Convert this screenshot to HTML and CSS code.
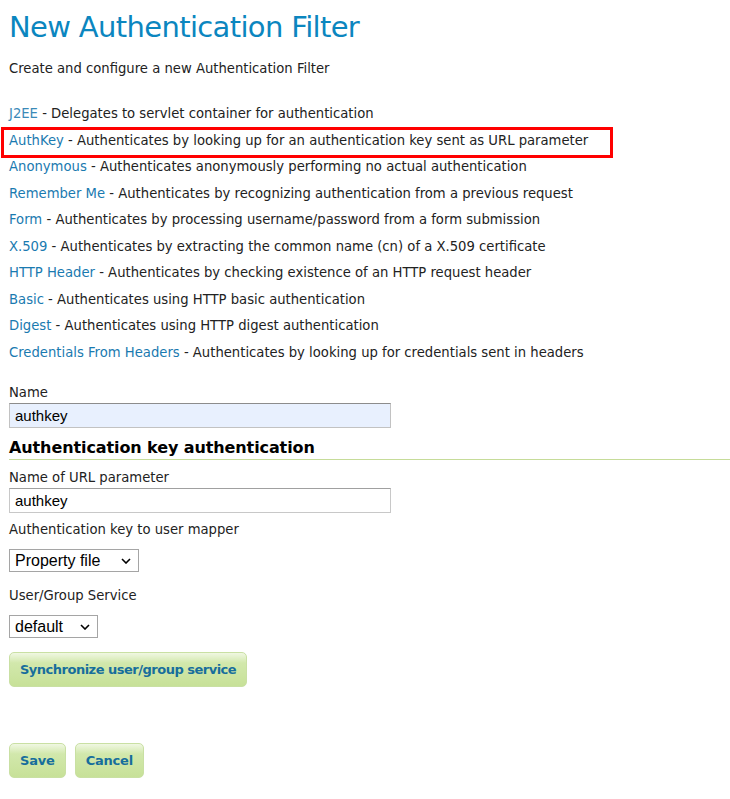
FILE: index.html
```html
<!DOCTYPE html>
<html>
<head>
<meta charset="utf-8">
<link rel="stylesheet" href="styles.css">
</head>
<body>
<div class="page">
  <h1 class="title">New Authentication Filter</h1>
  <p class="subtitle">Create and configure a new Authentication Filter</p>

  <ul class="filters">
    <li><a class="link visited">J2EE</a> - Delegates to servlet container for authentication</li>
    <li class="highlight"><a class="link">AuthKey</a> - Authenticates by looking up for an authentication key sent as URL parameter</li>
    <li><a class="link">Anonymous</a> - Authenticates anonymously performing no actual authentication</li>
    <li><a class="link">Remember Me</a> - Authenticates by recognizing authentication from a previous request</li>
    <li><a class="link">Form</a> - Authenticates by processing username/password from a form submission</li>
    <li><a class="link">X.509</a> - Authenticates by extracting the common name (cn) of a X.509 certificate</li>
    <li><a class="link">HTTP Header</a> - Authenticates by checking existence of an HTTP request header</li>
    <li><a class="link">Basic</a> - Authenticates using HTTP basic authentication</li>
    <li><a class="link">Digest</a> - Authenticates using HTTP digest authentication</li>
    <li><a class="link">Credentials From Headers</a> - Authenticates by looking up for credentials sent in headers</li>
  </ul>

  <div class="field first">
    <label class="label">Name</label>
    <input class="text autofill" type="text" value="authkey">
  </div>

  <h2 class="section">Authentication key authentication</h2>

  <div class="field after-section">
    <label class="label">Name of URL parameter</label>
    <input class="text" type="text" value="authkey">
  </div>

  <div class="field sel-field mapper-field">
    <label class="label">Authentication key to user mapper</label>
    <div class="select sel-mapper"><span>Property file</span><svg class="chev" viewBox="0 0 10 6" width="10" height="6"><path d="M1 1 L5 5 L9 1" fill="none" stroke="#000" stroke-width="1.6"/></svg></div>
  </div>

  <div class="field sel-field service-field">
    <label class="label">User/Group Service</label>
    <div class="select sel-service"><span>default</span><svg class="chev" viewBox="0 0 10 6" width="10" height="6"><path d="M1 1 L5 5 L9 1" fill="none" stroke="#000" stroke-width="1.6"/></svg></div>
  </div>

  <div class="sync-row">
    <button class="btn">Synchronize user/group service</button>
  </div>

  <div class="actions">
    <button class="btn">Save</button>
    <button class="btn">Cancel</button>
  </div>
</div>
</body>
</html>
```

FILE: styles.css
```css
html, body {
  margin: 0;
  padding: 0;
  background: #ffffff;
}
body {
  font-family: "DejaVu Sans", Verdana, sans-serif;
  font-size: 13.2px;
  color: #222222;
}
.page {
  padding: 0 0 0 9px;
}
.title {
  margin: 0;
  padding-top: 8px;
  font-family: "DejaVu Sans", Verdana, sans-serif;
  font-weight: normal;
  font-size: 29px;
  line-height: 38px;
  color: #0b86bf;
  letter-spacing: -0.65px;
}
.subtitle {
  margin: 13px 0 0 0;
  line-height: 20px;
}
.filters {
  list-style: none;
  margin: 22px 0 0 0;
  padding: 0;
}
.filters li {
  line-height: 26.5px;
  position: relative;
  white-space: nowrap;
}
.link {
  color: #1a7ab0;
  text-decoration: none;
}
.link.visited {
  color: #3a8ab8;
}
.highlight::after {
  content: "";
  position: absolute;
  left: -8px;
  top: -1px;
  width: 612px;
  height: 31px;
  border: 3px solid #ff0000;
  box-sizing: border-box;
}
.field {
  display: flex;
  flex-direction: column;
  align-items: flex-start;
}
.field.first {
  margin-top: 17px;
}
.label {
  line-height: 20px;
}
.text {
  width: 382px;
  height: 25px;
  box-sizing: border-box;
  border: 1px solid #c8c8c8;
  border-top-color: #a0a0a0;
  padding: 0 5px;
  font-family: "Liberation Sans", Arial, sans-serif;
  font-size: 15px;
  color: #000;
  background: #fff;
  margin: 0;
}
.text.autofill {
  background: #e8f0fe;
  border-color: #c2c2c2;
  border-top-color: #8c8c8c;
}
.section {
  margin: 9px 0 0 0;
  font-size: 16px;
  font-weight: bold;
  line-height: 22px;
  color: #000;
  border-bottom: 1px solid #c6dc99;
  padding-bottom: 0;
  letter-spacing: -0.1px;
}
.field.after-section {
  margin-top: 8px;
}
.field.mapper-field {
  margin-top: 7px;
}
.field.service-field {
  margin-top: 14px;
}
.sel-field .label {
  margin-bottom: 9px;
}
.select {
  display: flex;
  align-items: center;
  justify-content: space-between;
  box-sizing: border-box;
  height: 23px;
  border: 1px solid #a5a5a5;
  padding: 0 7px 0 5px;
  font-family: "Liberation Sans", Arial, sans-serif;
  font-size: 16px;
  color: #000;
  background: #fff;
}
.sel-mapper { width: 130px; }
.sel-service { width: 89px; }
.chev { flex: none; }
.sync-row {
  margin-top: 14px;
}
.btn {
  font-family: "DejaVu Sans", Verdana, sans-serif;
  font-weight: bold;
  font-size: 13px;
  color: #176e9c;
  height: 35px;
  padding: 0 10px;
  border: 1px solid #c9e0a3;
  border-radius: 5px;
  background: linear-gradient(to bottom, #f0f7e2 0%, #d2e8ac 30%, #c7e198 100%);
  cursor: pointer;
  letter-spacing: -0.5px;
}
.actions {
  margin-top: 56px;
  display: flex;
  gap: 9px;
}
.actions .btn {
  padding: 0 10px;
  letter-spacing: -0.2px;
}
```
